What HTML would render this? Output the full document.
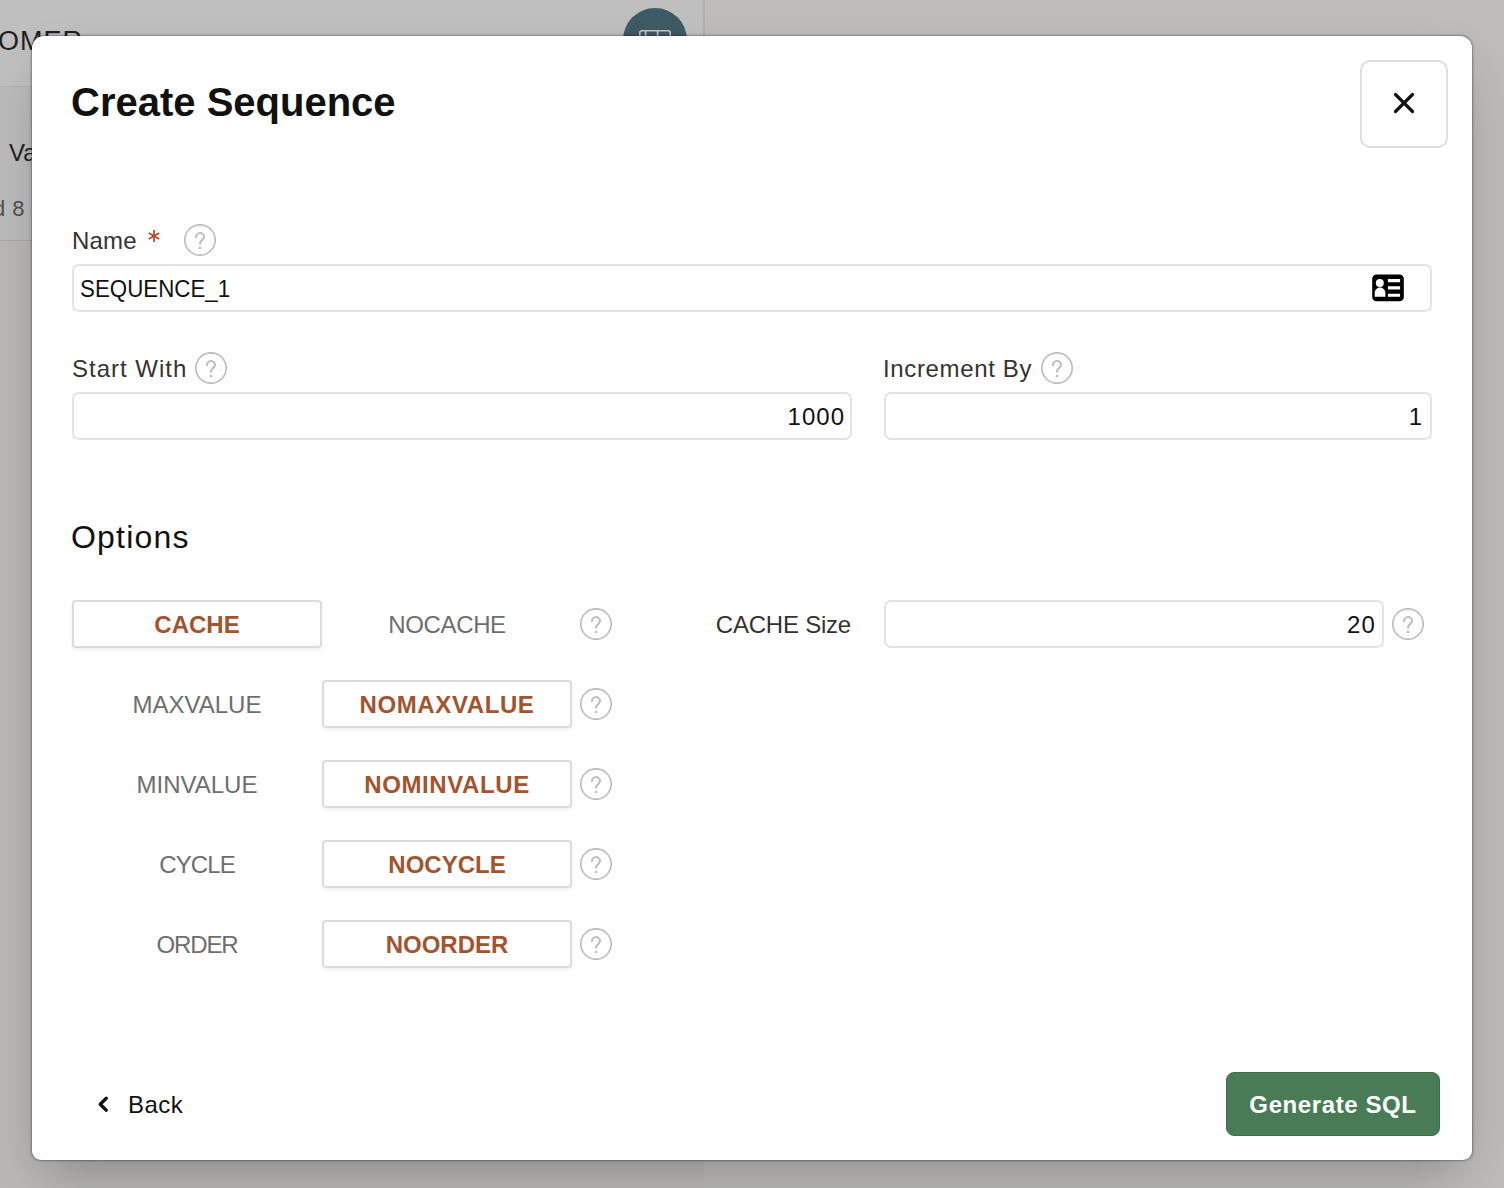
<!DOCTYPE html>
<html><head><meta charset="utf-8">
<style>
*{box-sizing:border-box;margin:0;padding:0}
html,body{width:1504px;height:1188px;overflow:hidden}
body{position:relative;background:#bdbcba;font-family:"Liberation Sans",sans-serif}
.a{position:absolute}
.t{position:absolute;white-space:nowrap;line-height:1}
#bgl{left:0;top:0;width:704px;height:242px;background:#bfbfbf}
#bgline1{left:0;top:86px;width:704px;height:1px;background:#b3b3b3}
#bgrow{left:0;top:87px;width:704px;height:153px;background:#bbbbbb}
#bgline2{left:0;top:240px;width:704px;height:1px;background:#a9a9a7}
#bglow{left:0;top:241px;width:704px;height:947px;background:#b9b8b6}
#vline{left:703px;top:0;width:2px;height:40px;background:#b1b0ae}
#circ{left:623px;top:8px;width:64px;height:64px;border-radius:50%;background:#3d5a65}
#dlg{left:32px;top:36px;width:1440px;height:1124px;background:#fff;border-radius:12px 12px 9px 9px;
 box-shadow:0 0 0 1px rgba(0,0,0,.16),0 0 2px 1.5px rgba(0,0,0,.1),0 25px 50px -12px rgba(0,0,0,.25)}
.inp{position:absolute;border:2px solid #e3e3e3;border-radius:7px;background:#fff;height:48px}
.lbl{color:#37332f;font-size:24px}
.opt{color:#6e6e6e;font-size:24px;text-align:center}
.btn{position:absolute;height:48px;border:2px solid #dcdcdc;border-radius:4px;background:#fff;
 box-shadow:0 2px 4px rgba(0,0,0,.06)}
.btxt{color:#a3542e;font-size:24px;font-weight:bold}
.help{position:absolute;width:32px;height:32px}
.val{color:#111;font-size:24px}
</style></head>
<body>
<div class="a" id="bgl"></div>
<div class="a" id="bgrow"></div>
<div class="a" id="bgline1"></div>
<div class="a" id="bgline2"></div>
<div class="a" id="bglow"></div>
<div class="a" id="vline"></div>
<div class="t" style="left:-2px;top:28px;font-size:27px;color:#1f1f1f;letter-spacing:1px">OMER</div>
<div class="t" style="left:9px;top:141px;font-size:24px;color:#222">Va</div>
<div class="t" style="left:-7px;top:198px;font-size:22px;color:#505050;letter-spacing:0.5px">d 8</div>
<div class="a" id="circ"></div>
<svg class="a" style="left:637px;top:29px" width="36" height="30" viewBox="0 0 36 30">
 <rect x="2.8" y="1.8" width="30.4" height="24" rx="2" fill="none" stroke="#c4c4c4" stroke-width="1.6"/>
 <line x1="8.6" y1="2" x2="8.6" y2="26" stroke="#c4c4c4" stroke-width="1.6"/>
 <line x1="20.6" y1="2" x2="20.6" y2="26" stroke="#c4c4c4" stroke-width="1.6"/>
</svg>

<div class="a" id="dlg"></div>

<!-- title -->
<div class="t" style="left:71px;top:82px;font-size:40px;font-weight:bold;color:#111">Create Sequence</div>
<!-- close -->
<div class="a" style="left:1360px;top:60px;width:88px;height:88px;border:2px solid #dedede;border-radius:10px"></div>
<svg class="a" style="left:1390px;top:89px" width="28" height="28" viewBox="0 0 28 28">
 <path d="M5.5 5.5 L22.5 22.5 M22.5 5.5 L5.5 22.5" stroke="#141414" stroke-width="3.2" stroke-linecap="round"/>
</svg>

<!-- Name -->
<div class="t lbl" style="left:72px;top:229px;letter-spacing:0.2px">Name</div>
<svg class="a" style="left:146px;top:228px" width="16" height="16" viewBox="0 0 16 16">
 <path d="M8 2 V14 M2.8 5 L13.2 11 M13.2 5 L2.8 11" stroke="#c0462c" stroke-width="1.7"/>
</svg>
<svg class="help" style="left:184px;top:224px" viewBox="0 0 32 32"><use href="#q"/></svg>
<div class="inp" style="left:72px;top:264px;width:1360px"></div>
<div class="t val" style="left:80px;top:277px;transform:scaleX(0.93);transform-origin:0 0">SEQUENCE_1</div>
<svg class="a" style="left:1372px;top:274px" width="32" height="28" viewBox="0 0 32 28">
 <path fill="#000" fill-rule="evenodd" d="M4.5 0.5 H27.5 A4.3 4.3 0 0 1 31.8 4.8 V22.9 A4.3 4.3 0 0 1 27.5 27.2 H4.5 A4.3 4.3 0 0 1 0.2 22.9 V4.8 A4.3 4.3 0 0 1 4.5 0.5 Z
 M7.8 4.9 A4 4 0 1 0 7.8 12.9 A4 4 0 1 0 7.8 4.9 Z
 M2.7 22.8 V19.3 C2.7 16 5 13.5 8 13.5 C11 13.5 13.4 16 13.4 19.3 V22.8 Z
 M15.9 5.1 H28.1 V8.2 H15.9 Z M15.9 12.3 H28.1 V15.5 H15.9 Z M15.9 19.8 H28.1 V22.8 H15.9 Z"/>
</svg>

<!-- Start With / Increment By -->
<div class="t lbl" style="left:72px;top:357px;letter-spacing:1px">Start With</div>
<svg class="help" style="left:195px;top:352px" viewBox="0 0 32 32"><use href="#q"/></svg>
<div class="inp" style="left:72px;top:392px;width:780px"></div>
<div class="t val" style="left:600px;top:405px;width:245px;text-align:right;letter-spacing:1px">1000</div>

<div class="t lbl" style="left:883px;top:357px;letter-spacing:0.64px">Increment By</div>
<svg class="help" style="left:1041px;top:352px" viewBox="0 0 32 32"><use href="#q"/></svg>
<div class="inp" style="left:884px;top:392px;width:548px"></div>
<div class="t val" style="left:1200px;top:405px;width:222px;text-align:right">1</div>

<!-- Options -->
<div class="t" style="left:71px;top:521px;font-size:32px;color:#111;letter-spacing:1.2px">Options</div>

<div class="btn" style="left:72px;top:600px;width:250px"></div>
<div class="t btxt" style="left:72px;top:613px;width:250px;text-align:center">CACHE</div>
<div class="t opt" style="left:322px;top:613px;width:250px;letter-spacing:-0.35px">NOCACHE</div>
<svg class="help" style="left:580px;top:608px" viewBox="0 0 32 32"><use href="#q"/></svg>

<div class="t lbl" style="left:600px;top:613px;width:251px;text-align:right;letter-spacing:-0.22px">CACHE Size</div>
<div class="inp" style="left:884px;top:600px;width:500px"></div>
<div class="t val" style="left:1200px;top:613px;width:176px;text-align:right;letter-spacing:1.2px">20</div>
<svg class="help" style="left:1392px;top:608px" viewBox="0 0 32 32"><use href="#q"/></svg>

<div class="t opt" style="left:72px;top:693px;width:250px">MAXVALUE</div>
<div class="btn" style="left:322px;top:680px;width:250px"></div>
<div class="t btxt" style="left:322px;top:693px;width:250px;text-align:center;letter-spacing:0.6px">NOMAXVALUE</div>
<svg class="help" style="left:580px;top:688px" viewBox="0 0 32 32"><use href="#q"/></svg>

<div class="t opt" style="left:72px;top:773px;width:250px">MINVALUE</div>
<div class="btn" style="left:322px;top:760px;width:250px"></div>
<div class="t btxt" style="left:322px;top:773px;width:250px;text-align:center;letter-spacing:0.6px">NOMINVALUE</div>
<svg class="help" style="left:580px;top:768px" viewBox="0 0 32 32"><use href="#q"/></svg>

<div class="t opt" style="left:72px;top:853px;width:250px;letter-spacing:-0.9px">CYCLE</div>
<div class="btn" style="left:322px;top:840px;width:250px"></div>
<div class="t btxt" style="left:322px;top:853px;width:250px;text-align:center">NOCYCLE</div>
<svg class="help" style="left:580px;top:848px" viewBox="0 0 32 32"><use href="#q"/></svg>

<div class="t opt" style="left:72px;top:933px;width:250px;letter-spacing:-1.1px">ORDER</div>
<div class="btn" style="left:322px;top:920px;width:250px"></div>
<div class="t btxt" style="left:322px;top:933px;width:250px;text-align:center">NOORDER</div>
<svg class="help" style="left:580px;top:928px" viewBox="0 0 32 32"><use href="#q"/></svg>

<!-- footer -->
<svg class="a" style="left:94px;top:1092px" width="18" height="24" viewBox="0 0 18 24">
 <path d="M12.3 6.2 L6.2 12.2 L12.3 18.2" fill="none" stroke="#111" stroke-width="3.3" stroke-linecap="round" stroke-linejoin="round"/>
</svg>
<div class="t" style="left:128px;top:1093px;font-size:24px;color:#111;letter-spacing:0.5px">Back</div>

<div class="a" style="left:1226px;top:1072px;width:214px;height:64px;background:#4a7b57;border:1px solid #3f6e4c;border-radius:8px"></div>
<div class="t" style="left:1226px;top:1093px;width:214px;text-align:center;font-size:24px;font-weight:bold;color:#fff;letter-spacing:0.6px">Generate SQL</div>

<svg width="0" height="0" style="position:absolute">
 <defs>
  <g id="q">
   <circle cx="16" cy="16" r="15.2" fill="none" stroke="#bdbdbd" stroke-width="1.7"/>
   <path d="M12 13.2 C12 10.8 13.8 9 16 9 C18.2 9 20 10.8 20 12.8 C20 14.5 18.8 15.3 17.6 16.5 C16.6 17.5 16 18.3 16 19.8" fill="none" stroke="#bdbdbd" stroke-width="2.1" stroke-linecap="round" stroke-linejoin="round"/>
   <circle cx="16" cy="24" r="1.35" fill="#bdbdbd"/>
  </g>
 </defs>
</svg>
</body></html>
